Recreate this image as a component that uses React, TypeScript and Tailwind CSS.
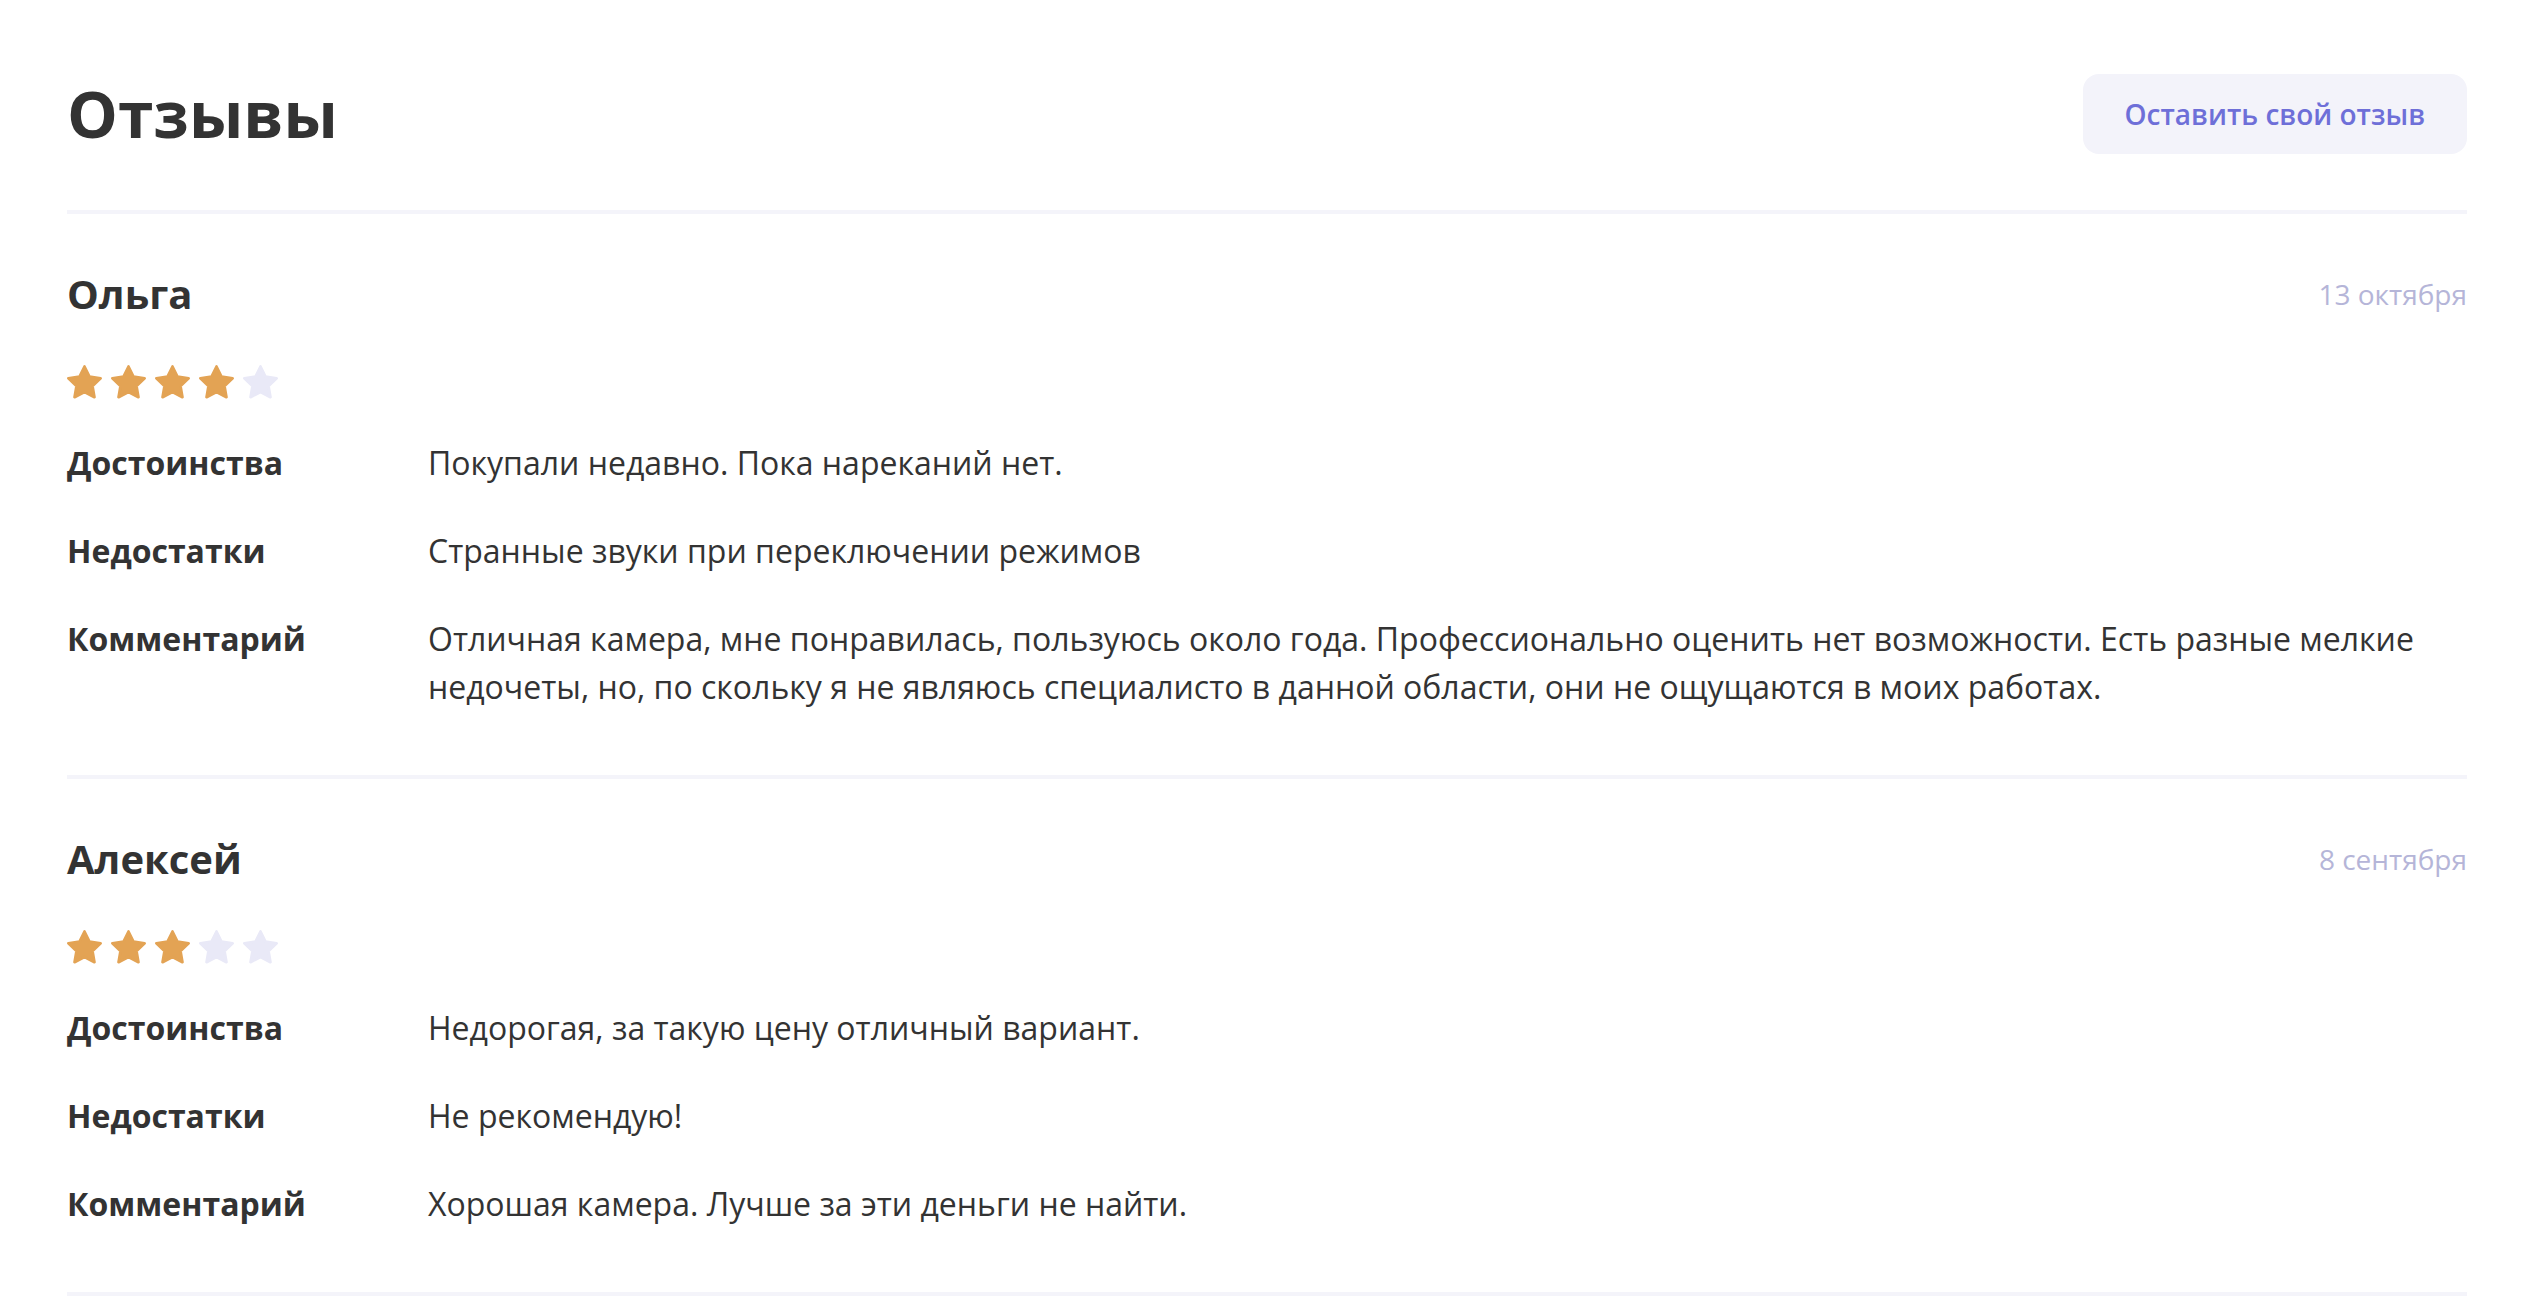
import React from 'react'

type Review = {
  name: string
  date: string
  rating: number
  pros: string
  cons: string
  comment: string
}

const reviews: Review[] = [
  {
    name: 'Ольга',
    date: '13 октября',
    rating: 4,
    pros: 'Покупали недавно. Пока нареканий нет.',
    cons: 'Странные звуки при переключении режимов',
    comment:
      'Отличная камера, мне понравилась, пользуюсь около года. Профессионально оценить нет возможности. Есть разные мелкие недочеты, но, по скольку я не являюсь специалисто в данной области, они не ощущаются в моих работах.',
  },
  {
    name: 'Алексей',
    date: '8 сентября',
    rating: 3,
    pros: 'Недорогая, за такую цену отличный вариант.',
    cons: 'Не рекомендую!',
    comment: 'Хорошая камера. Лучше за эти деньги не найти.',
  },
]

function Star({ filled }: { filled: boolean }) {
  const color = filled ? '#e3a354' : '#e9e9f7'
  return (
    <svg width="35" height="34" viewBox="-1 -1 26 25">
      <polygon
        points="12,0 15.7,7.5 23.98,8.71 17.99,14.55 19.41,22.79 12,18.9 4.59,22.79 6.01,14.55 0.02,8.71 8.3,7.5"
        fill={color}
        stroke={color}
        strokeWidth="2"
        strokeLinejoin="round"
      />
    </svg>
  )
}

function Row({ label, children }: { label: string; children: React.ReactNode }) {
  return (
    <div className="grid grid-cols-[361px_1fr]">
      <div className="font-bold text-[32px] leading-[48px] text-[#333333]">{label}</div>
      <div className="text-[32px] leading-[48px] text-[#333333]">{children}</div>
    </div>
  )
}

function ReviewItem({ review }: { review: Review }) {
  return (
    <div className="pt-[56px] pb-[64px] border-b-4 border-[#f4f4fa]">
      <div className="flex items-center justify-between">
        <h3 className="text-[40px] leading-[48px] font-bold text-[#333333]">{review.name}</h3>
        <span className="text-[28px] leading-[36px] text-[#b5b5d8]">{review.date}</span>
      </div>
      <div className="mt-[47px] flex gap-[9px]">
        {[1, 2, 3, 4, 5].map((i) => (
          <Star key={i} filled={i <= review.rating} />
        ))}
      </div>
      <div className="mt-[40px] flex flex-col gap-[40px]">
        <Row label="Достоинства">{review.pros}</Row>
        <Row label="Недостатки">{review.cons}</Row>
        <Row label="Комментарий">{review.comment}</Row>
      </div>
    </div>
  )
}

export default function App() {
  return (
    <div className="min-h-screen bg-white pl-[67px] pr-[63px] pt-[74px] font-['Open_Sans',sans-serif]">
      {/* Header */}
      <div className="flex items-center justify-between pb-[56px] border-b-4 border-[#f4f4fa]">
        <h2 className="text-[64px] leading-[80px] font-bold text-[#333333]">Отзывы</h2>
        <button className="h-[80px] px-[42px] rounded-2xl bg-[#f3f3fa] text-[28px] font-semibold text-[#6e6fd8]">
          Оставить свой отзыв
        </button>
      </div>

      {reviews.map((r) => (
        <ReviewItem key={r.name} review={r} />
      ))}
    </div>
  )
}
